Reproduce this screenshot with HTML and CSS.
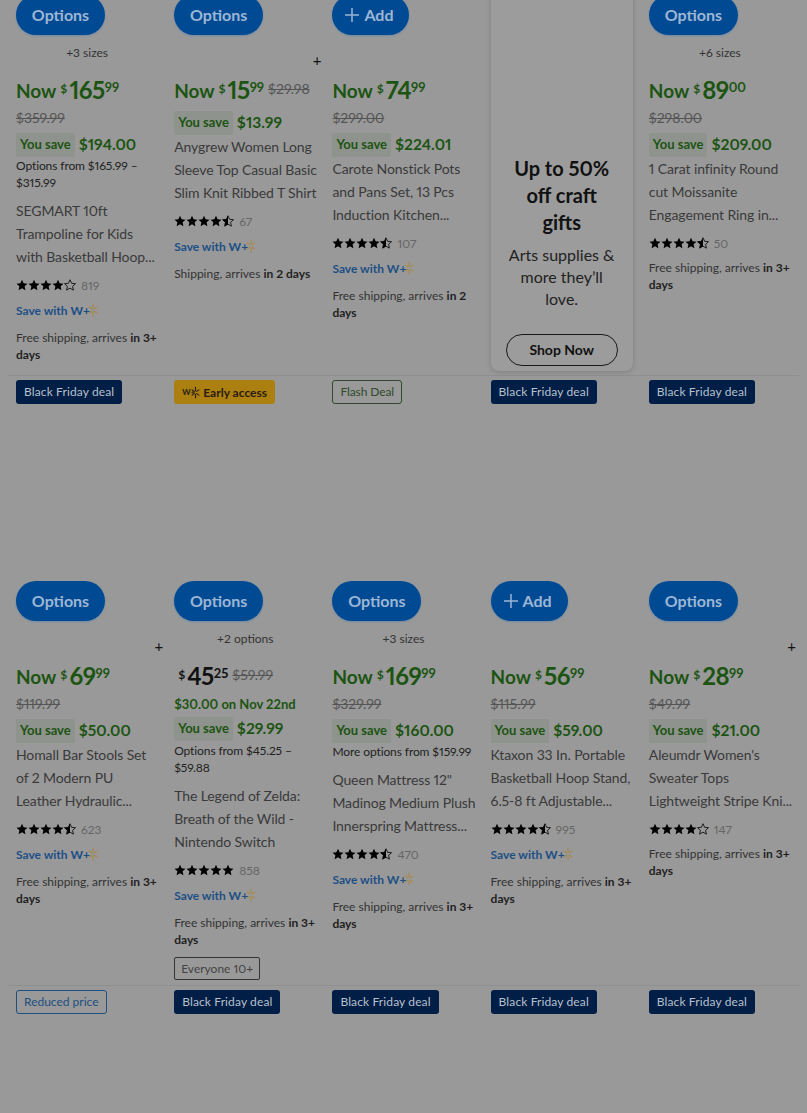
FILE: index.html
```html
<!DOCTYPE html>
<html>
<head>
	<title>Black Friday deals</title>
	<link rel="stylesheet" href="styles.css">
</head>
<body>
	<svg class="defs" width="0" height="0">
		<defs>
			<symbol id="star" viewBox="0 0 24 24"><path d="M12 1.5l3.2 7.1 7.8.8-5.8 5.2 1.6 7.7L12 18.4l-6.8 3.9 1.6-7.7L1 9.4l7.8-.8z"/></symbol>
			<symbol id="star-half" viewBox="0 0 24 24"><path d="M12 1.5l3.2 7.1 7.8.8-5.8 5.2 1.6 7.7L12 18.4l-6.8 3.9 1.6-7.7L1 9.4l7.8-.8z" fill="none" stroke="#000" stroke-width="1.6"/><path d="M12 1.5v16.9l-6.8 3.9 1.6-7.7L1 9.4l7.8-.8z"/></symbol>
			<symbol id="star-empty" viewBox="0 0 24 24"><path d="M12 1.5l3.2 7.1 7.8.8-5.8 5.2 1.6 7.7L12 18.4l-6.8 3.9 1.6-7.7L1 9.4l7.8-.8z" fill="none" stroke="#000" stroke-width="1.6"/></symbol>
			<symbol id="spark" viewBox="0 0 12 16"><path d="M6 1v4.500M6 10.500V15M10.500 4.500L7.500 6.500M10.500 11.500L7.500 9.500M1.500 4.500l3 2M1.500 11.500l3-2" fill="none" stroke-width="1.500" stroke-linecap="round"/></symbol>
			<symbol id="plus" viewBox="0 0 14 14"><path d="M7 0v14M0 7h14" fill="none" stroke="currentColor" stroke-width="1.500"/></symbol>
		</defs>
	</svg>

	<div class="grid">

		<!-- row 1 -->
		<div class="cell">
			<div class="tag-row"></div>
			<div class="media"></div>
			<button class="btn">Options</button>
			<div class="variants">+3 sizes</div>
			<div class="price now"><span class="now-label">Now</span><span class="cur">$</span><span class="whole">165</span><span class="cents">99</span></div>
			<div class="was">$359.99</div>
			<div class="save-row"><span class="pill">You save</span><span class="amount">$194.00</span></div>
			<div class="options">Options from $165.99 – $315.99</div>
			<div class="title">SEGMART 10ft<br>Trampoline for Kids<br>with Basketball Hoop...</div>
			<div class="rating"><svg><use href="#star"/></svg><svg><use href="#star"/></svg><svg><use href="#star"/></svg><svg><use href="#star"/></svg><svg><use href="#star-empty"/></svg><span class="count">819</span></div>
			<div class="wplus">Save with W+<svg><use href="#spark"/></svg></div>
			<div class="ship">Free shipping, arrives <b>in 3+ days</b></div>
		</div>

		<div class="cell">
			<div class="tag-row"></div>
			<div class="media"></div>
			<button class="btn">Options</button>
			<div class="variants plus">+</div>
			<div class="price now"><span class="now-label">Now</span><span class="cur">$</span><span class="whole">15</span><span class="cents">99</span><span class="was-inline">$29.98</span></div>
			<div class="save-row"><span class="pill">You save</span><span class="amount">$13.99</span></div>
			<div class="title">Anygrew Women Long<br>Sleeve Top Casual Basic<br>Slim Knit Ribbed T Shirt</div>
			<div class="rating"><svg><use href="#star"/></svg><svg><use href="#star"/></svg><svg><use href="#star"/></svg><svg><use href="#star"/></svg><svg><use href="#star-half"/></svg><span class="count">67</span></div>
			<div class="wplus">Save with W+<svg><use href="#spark"/></svg></div>
			<div class="ship">Shipping, arrives <b>in 2 days</b></div>
		</div>

		<div class="cell">
			<div class="tag-row"></div>
			<div class="media"></div>
			<button class="btn btn-add"><svg class="add-icon"><use href="#plus"/></svg>Add</button>
			<div class="variants"></div>
			<div class="price now"><span class="now-label">Now</span><span class="cur">$</span><span class="whole">74</span><span class="cents">99</span></div>
			<div class="was">$299.00</div>
			<div class="save-row"><span class="pill">You save</span><span class="amount">$224.01</span></div>
			<div class="title">Carote Nonstick Pots<br>and Pans Set, 13 Pcs<br>Induction Kitchen...</div>
			<div class="rating"><svg><use href="#star"/></svg><svg><use href="#star"/></svg><svg><use href="#star"/></svg><svg><use href="#star"/></svg><svg><use href="#star-half"/></svg><span class="count">107</span></div>
			<div class="wplus">Save with W+<svg><use href="#spark"/></svg></div>
			<div class="ship">Free shipping, arrives <b>in 2 days</b></div>
		</div>

		<div class="cell">
			<div class="promo">
				<h2>Up to 50% off craft gifts</h2>
				<p>Arts supplies &amp; more they’ll love.</p>
				<button class="btn-outline">Shop Now</button>
			</div>
		</div>

		<div class="cell">
			<div class="tag-row"></div>
			<div class="media"></div>
			<button class="btn">Options</button>
			<div class="variants">+6 sizes</div>
			<div class="price now"><span class="now-label">Now</span><span class="cur">$</span><span class="whole">89</span><span class="cents">00</span></div>
			<div class="was">$298.00</div>
			<div class="save-row"><span class="pill">You save</span><span class="amount">$209.00</span></div>
			<div class="title">1 Carat infinity Round<br>cut Moissanite<br>Engagement Ring in...</div>
			<div class="rating"><svg><use href="#star"/></svg><svg><use href="#star"/></svg><svg><use href="#star"/></svg><svg><use href="#star"/></svg><svg><use href="#star-half"/></svg><span class="count">50</span></div>
			<div class="ship ship-after-rating">Free shipping, arrives <b>in 3+ days</b></div>
		</div>

		<!-- row 2 -->
		<div class="cell">
			<div class="tag-row"><span class="tag tag-navy">Black Friday deal</span></div>
			<div class="media"></div>
			<button class="btn">Options</button>
			<div class="variants plus">+</div>
			<div class="price now"><span class="now-label">Now</span><span class="cur">$</span><span class="whole">69</span><span class="cents">99</span></div>
			<div class="was">$119.99</div>
			<div class="save-row"><span class="pill">You save</span><span class="amount">$50.00</span></div>
			<div class="title">Homall Bar Stools Set<br>of 2 Modern PU<br>Leather Hydraulic...</div>
			<div class="rating"><svg><use href="#star"/></svg><svg><use href="#star"/></svg><svg><use href="#star"/></svg><svg><use href="#star"/></svg><svg><use href="#star-half"/></svg><span class="count">623</span></div>
			<div class="wplus">Save with W+<svg><use href="#spark"/></svg></div>
			<div class="ship">Free shipping, arrives <b>in 3+ days</b></div>
		</div>

		<div class="cell">
			<div class="tag-row"><span class="tag tag-gold"><span class="w-mark">W+<svg><use href="#spark"/></svg></span>Early access</span></div>
			<div class="media"></div>
			<button class="btn">Options</button>
			<div class="variants">+2 options</div>
			<div class="price plain"><span class="cur">$</span><span class="whole">45</span><span class="cents">25</span><span class="was-inline">$59.99</span></div>
			<div class="deal-date">$30.00 on Nov 22nd</div>
			<div class="save-row save-row-tight"><span class="pill">You save</span><span class="amount">$29.99</span></div>
			<div class="options">Options from $45.25 – $59.88</div>
			<div class="title">The Legend of Zelda:<br>Breath of the Wild -<br>Nintendo Switch</div>
			<div class="rating"><svg><use href="#star"/></svg><svg><use href="#star"/></svg><svg><use href="#star"/></svg><svg><use href="#star"/></svg><svg><use href="#star"/></svg><span class="count">858</span></div>
			<div class="wplus">Save with W+<svg><use href="#spark"/></svg></div>
			<div class="ship">Free shipping, arrives <b>in 3+ days</b></div>
			<span class="esrb">Everyone 10+</span>
		</div>

		<div class="cell">
			<div class="tag-row"><span class="tag tag-flash">Flash Deal</span></div>
			<div class="media"></div>
			<button class="btn">Options</button>
			<div class="variants">+3 sizes</div>
			<div class="price now"><span class="now-label">Now</span><span class="cur">$</span><span class="whole">169</span><span class="cents">99</span></div>
			<div class="was">$329.99</div>
			<div class="save-row"><span class="pill">You save</span><span class="amount">$160.00</span></div>
			<div class="options">More options from $159.99</div>
			<div class="title">Queen Mattress 12"<br>Madinog Medium Plush<br>Innerspring Mattress...</div>
			<div class="rating"><svg><use href="#star"/></svg><svg><use href="#star"/></svg><svg><use href="#star"/></svg><svg><use href="#star"/></svg><svg><use href="#star-half"/></svg><span class="count">470</span></div>
			<div class="wplus">Save with W+<svg><use href="#spark"/></svg></div>
			<div class="ship">Free shipping, arrives <b>in 3+ days</b></div>
		</div>

		<div class="cell">
			<div class="tag-row"><span class="tag tag-navy">Black Friday deal</span></div>
			<div class="media"></div>
			<button class="btn btn-add"><svg class="add-icon"><use href="#plus"/></svg>Add</button>
			<div class="variants"></div>
			<div class="price now"><span class="now-label">Now</span><span class="cur">$</span><span class="whole">56</span><span class="cents">99</span></div>
			<div class="was">$115.99</div>
			<div class="save-row"><span class="pill">You save</span><span class="amount">$59.00</span></div>
			<div class="title">Ktaxon 33 In. Portable<br>Basketball Hoop Stand,<br>6.5-8 ft Adjustable...</div>
			<div class="rating"><svg><use href="#star"/></svg><svg><use href="#star"/></svg><svg><use href="#star"/></svg><svg><use href="#star"/></svg><svg><use href="#star-half"/></svg><span class="count">995</span></div>
			<div class="wplus">Save with W+<svg><use href="#spark"/></svg></div>
			<div class="ship">Free shipping, arrives <b>in 3+ days</b></div>
		</div>

		<div class="cell">
			<div class="tag-row"><span class="tag tag-navy">Black Friday deal</span></div>
			<div class="media"></div>
			<button class="btn">Options</button>
			<div class="variants plus">+</div>
			<div class="price now"><span class="now-label">Now</span><span class="cur">$</span><span class="whole">28</span><span class="cents">99</span></div>
			<div class="was">$49.99</div>
			<div class="save-row"><span class="pill">You save</span><span class="amount">$21.00</span></div>
			<div class="title">Aleumdr Women's<br>Sweater Tops<br>Lightweight Stripe Kni...</div>
			<div class="rating"><svg><use href="#star"/></svg><svg><use href="#star"/></svg><svg><use href="#star"/></svg><svg><use href="#star"/></svg><svg><use href="#star-empty"/></svg><span class="count">147</span></div>
			<div class="ship ship-after-rating">Free shipping, arrives <b>in 3+ days</b></div>
		</div>

		<!-- row 3 -->
		<div class="cell"><div class="tag-row"><span class="tag tag-reduced">Reduced price</span></div></div>
		<div class="cell"><div class="tag-row"><span class="tag tag-navy">Black Friday deal</span></div></div>
		<div class="cell"><div class="tag-row"><span class="tag tag-navy">Black Friday deal</span></div></div>
		<div class="cell"><div class="tag-row"><span class="tag tag-navy">Black Friday deal</span></div></div>
		<div class="cell"><div class="tag-row"><span class="tag tag-navy">Black Friday deal</span></div></div>
	</div>
</body>
</html>
```

FILE: styles.css
```css
html, body {
	margin: 0;
	padding: 0;
	height: 100%;
	overflow: hidden;
	background-color: #999;
	font-family: "Lato", "Noto Sans", sans-serif;
	font-variant-numeric: proportional-nums;
	color: #222;
}

.defs {
	display: block;
	height: 0;
}

.grid {
	display: grid;
	grid-template-columns: repeat(5, 1fr);
	grid-template-rows: 586px 610px 127px;
	margin-top: -210px;
	padding: 0 8px;
}

.cell {
	padding: 4px 8px 4px;
	border-bottom: 1px solid #8f8f8f;
	min-width: 0;
}

.cell:nth-last-child(-n+5) {
	border-bottom: none;
}

.tag-row {
	display: flex;
	align-items: flex-start;
	height: 24px;
}

.media {
	height: 177px;
}

.tag {
	display: inline-flex;
	align-items: center;
	box-sizing: border-box;
	height: 24px;
	padding: 0 8px 2px;
	border-radius: 3px;
	font-size: 12px;
	white-space: nowrap;
}

.tag-navy {
	background-color: #001e46;
	color: #b8c0cc;
	letter-spacing: 0.12px;
}

.tag-gold {
	background-color: #ab8010;
	color: #2a1c10;
	font-weight: 700;
	padding-bottom: 0;
}

.tag-flash {
	border: 1px solid #2f4a2c;
	color: #2f4a2c;
	padding: 0 7px 2px;
	letter-spacing: -0.1px;
}

.tag-reduced {
	border: 1px solid #1d4f80;
	color: #1d4f80;
	padding: 0 7px 2px;
}

.w-mark {
	display: inline-flex;
	align-items: center;
	margin-right: 3px;
	font-size: 8px;
}

.w-mark svg {
	width: 9px;
	height: 13px;
	margin-left: -4px;
	stroke: #2a1c10;
}

.btn {
	display: block;
	box-sizing: border-box;
	height: 40px;
	width: 89px;
	padding: 0 0 2px;
	border: none;
	border-radius: 20px;
	background-color: #004a94;
	color: #9cb6d4;
	font-family: inherit;
	font-size: 16px;
	font-weight: 700;
	box-shadow: 0 1px 2px #6f8aa5;
}

.btn-add {
	display: flex;
	align-items: center;
	padding-left: 13px;
	width: 77px;
}

.add-icon {
	width: 14px;
	height: 14px;
	margin-top: 2px;
	margin-right: 5px;
}

.variants {
	height: 40px;
	padding-top: 9px;
	box-sizing: border-box;
	font-size: 12px;
	line-height: 17px;
	text-align: center;
	color: #333;
}

.variants.plus {
	padding-top: 17px;
	text-align: right;
	margin-right: -5px;
	font-size: 15px;
	color: #111;
}

.price {
	display: flex;
	align-items: flex-start;
	height: 31px;
	font-weight: 700;
	color: #1c5412;
}

.price.plain {
	color: #111;
	padding-left: 4px;
}

.now-label {
	font-size: 19px;
	line-height: 31px;
	margin-right: 4px;
}

.cur {
	font-size: 12px;
	line-height: 14px;
	margin-top: 7px;
	margin-right: 2px;
}

.whole {
	font-size: 24px;
	line-height: 30px;
	letter-spacing: -0.5px;
}

.cents {
	font-size: 13px;
	line-height: 14px;
	margin-top: 5px;
}

.was, .was-inline {
	font-size: 14px;
	font-weight: 400;
	color: #555;
	text-decoration: line-through;
}

.was {
	height: 20px;
	line-height: 20px;
	margin-top: 2px;
}

.was-inline {
	line-height: 18px;
	margin-left: 4px;
	margin-top: 5px;
}

.deal-date {
	height: 20px;
	margin-top: 2px;
	font-size: 13px;
	font-weight: 700;
	line-height: 20px;
	color: #1c5412;
}

.save-row {
	display: flex;
	align-items: center;
	height: 24px;
	margin-top: 5px;
}

.save-row-tight {
	margin-top: 3px;
}

.save-row-tight + .options {
	margin-top: 1px;
}

.pill {
	padding: 0 4px;
	height: 24px;
	line-height: 23px;
	background-color: #8f938d;
	color: #1c5412;
	font-size: 13px;
	font-weight: 700;
	border-radius: 2px;
}

.amount {
	margin-left: 4px;
	padding-bottom: 3px;
	font-size: 15.5px;
	font-weight: 700;
	color: #1c5412;
}

.options {
	margin-bottom: 8px;
	font-size: 12px;
	line-height: 17px;
	letter-spacing: -0.1px;
	color: #222;
}

.title {
	font-size: 14px;
	line-height: 23px;
	letter-spacing: -0.1px;
	white-space: nowrap;
	color: #3a3a3a;
}

.rating {
	display: flex;
	align-items: center;
	height: 16px;
	margin-top: 9px;
}

.rating svg {
	width: 12px;
	height: 12px;
	fill: #000;
}

.count {
	margin-left: 5px;
	font-size: 12px;
	color: #666;
}

.wplus {
	display: flex;
	align-items: center;
	height: 16px;
	margin-top: 9px;
	font-size: 12px;
	font-weight: 700;
	color: #1c4f85;
}

.wplus svg {
	width: 10px;
	height: 16px;
	margin-left: -2px;
	stroke: #a58a4e;
}

.ship {
	margin-top: 11px;
	font-size: 12px;
	line-height: 17px;
	color: #333;
}

.ship b {
	color: #1f1f1f;
}

.ship-after-rating {
	margin-top: 8px;
}

.esrb {
	display: block;
	box-sizing: border-box;
	width: 86px;
	height: 23px;
	margin-top: 9px;
	border: 1px solid #333;
	border-radius: 2px;
	font-size: 12px;
	line-height: 21px;
	text-align: center;
	color: #444;
}

.promo {
	display: flex;
	flex-direction: column;
	justify-content: flex-end;
	align-items: center;
	box-sizing: border-box;
	height: 100%;
	padding: 0 16px 5px;
	border-radius: 8px;
	background-color: #9c9c9c;
	box-shadow: 0 1px 5px #7e7e7e;
	text-align: center;
}

.promo h2 {
	margin: 0;
	font-size: 20px;
	font-weight: 700;
	line-height: 27px;
	color: #111;
}

.promo p {
	margin: 8px 0 24px;
	font-size: 16px;
	line-height: 22px;
	color: #222;
}

.btn-outline {
	flex: none;
	width: 112px;
	height: 32px;
	padding: 0 0 2px;
	border: 1px solid #1a1a1a;
	border-radius: 16px;
	background: none;
	color: #111;
	font-family: inherit;
	font-size: 14px;
	font-weight: 700;
}
```
